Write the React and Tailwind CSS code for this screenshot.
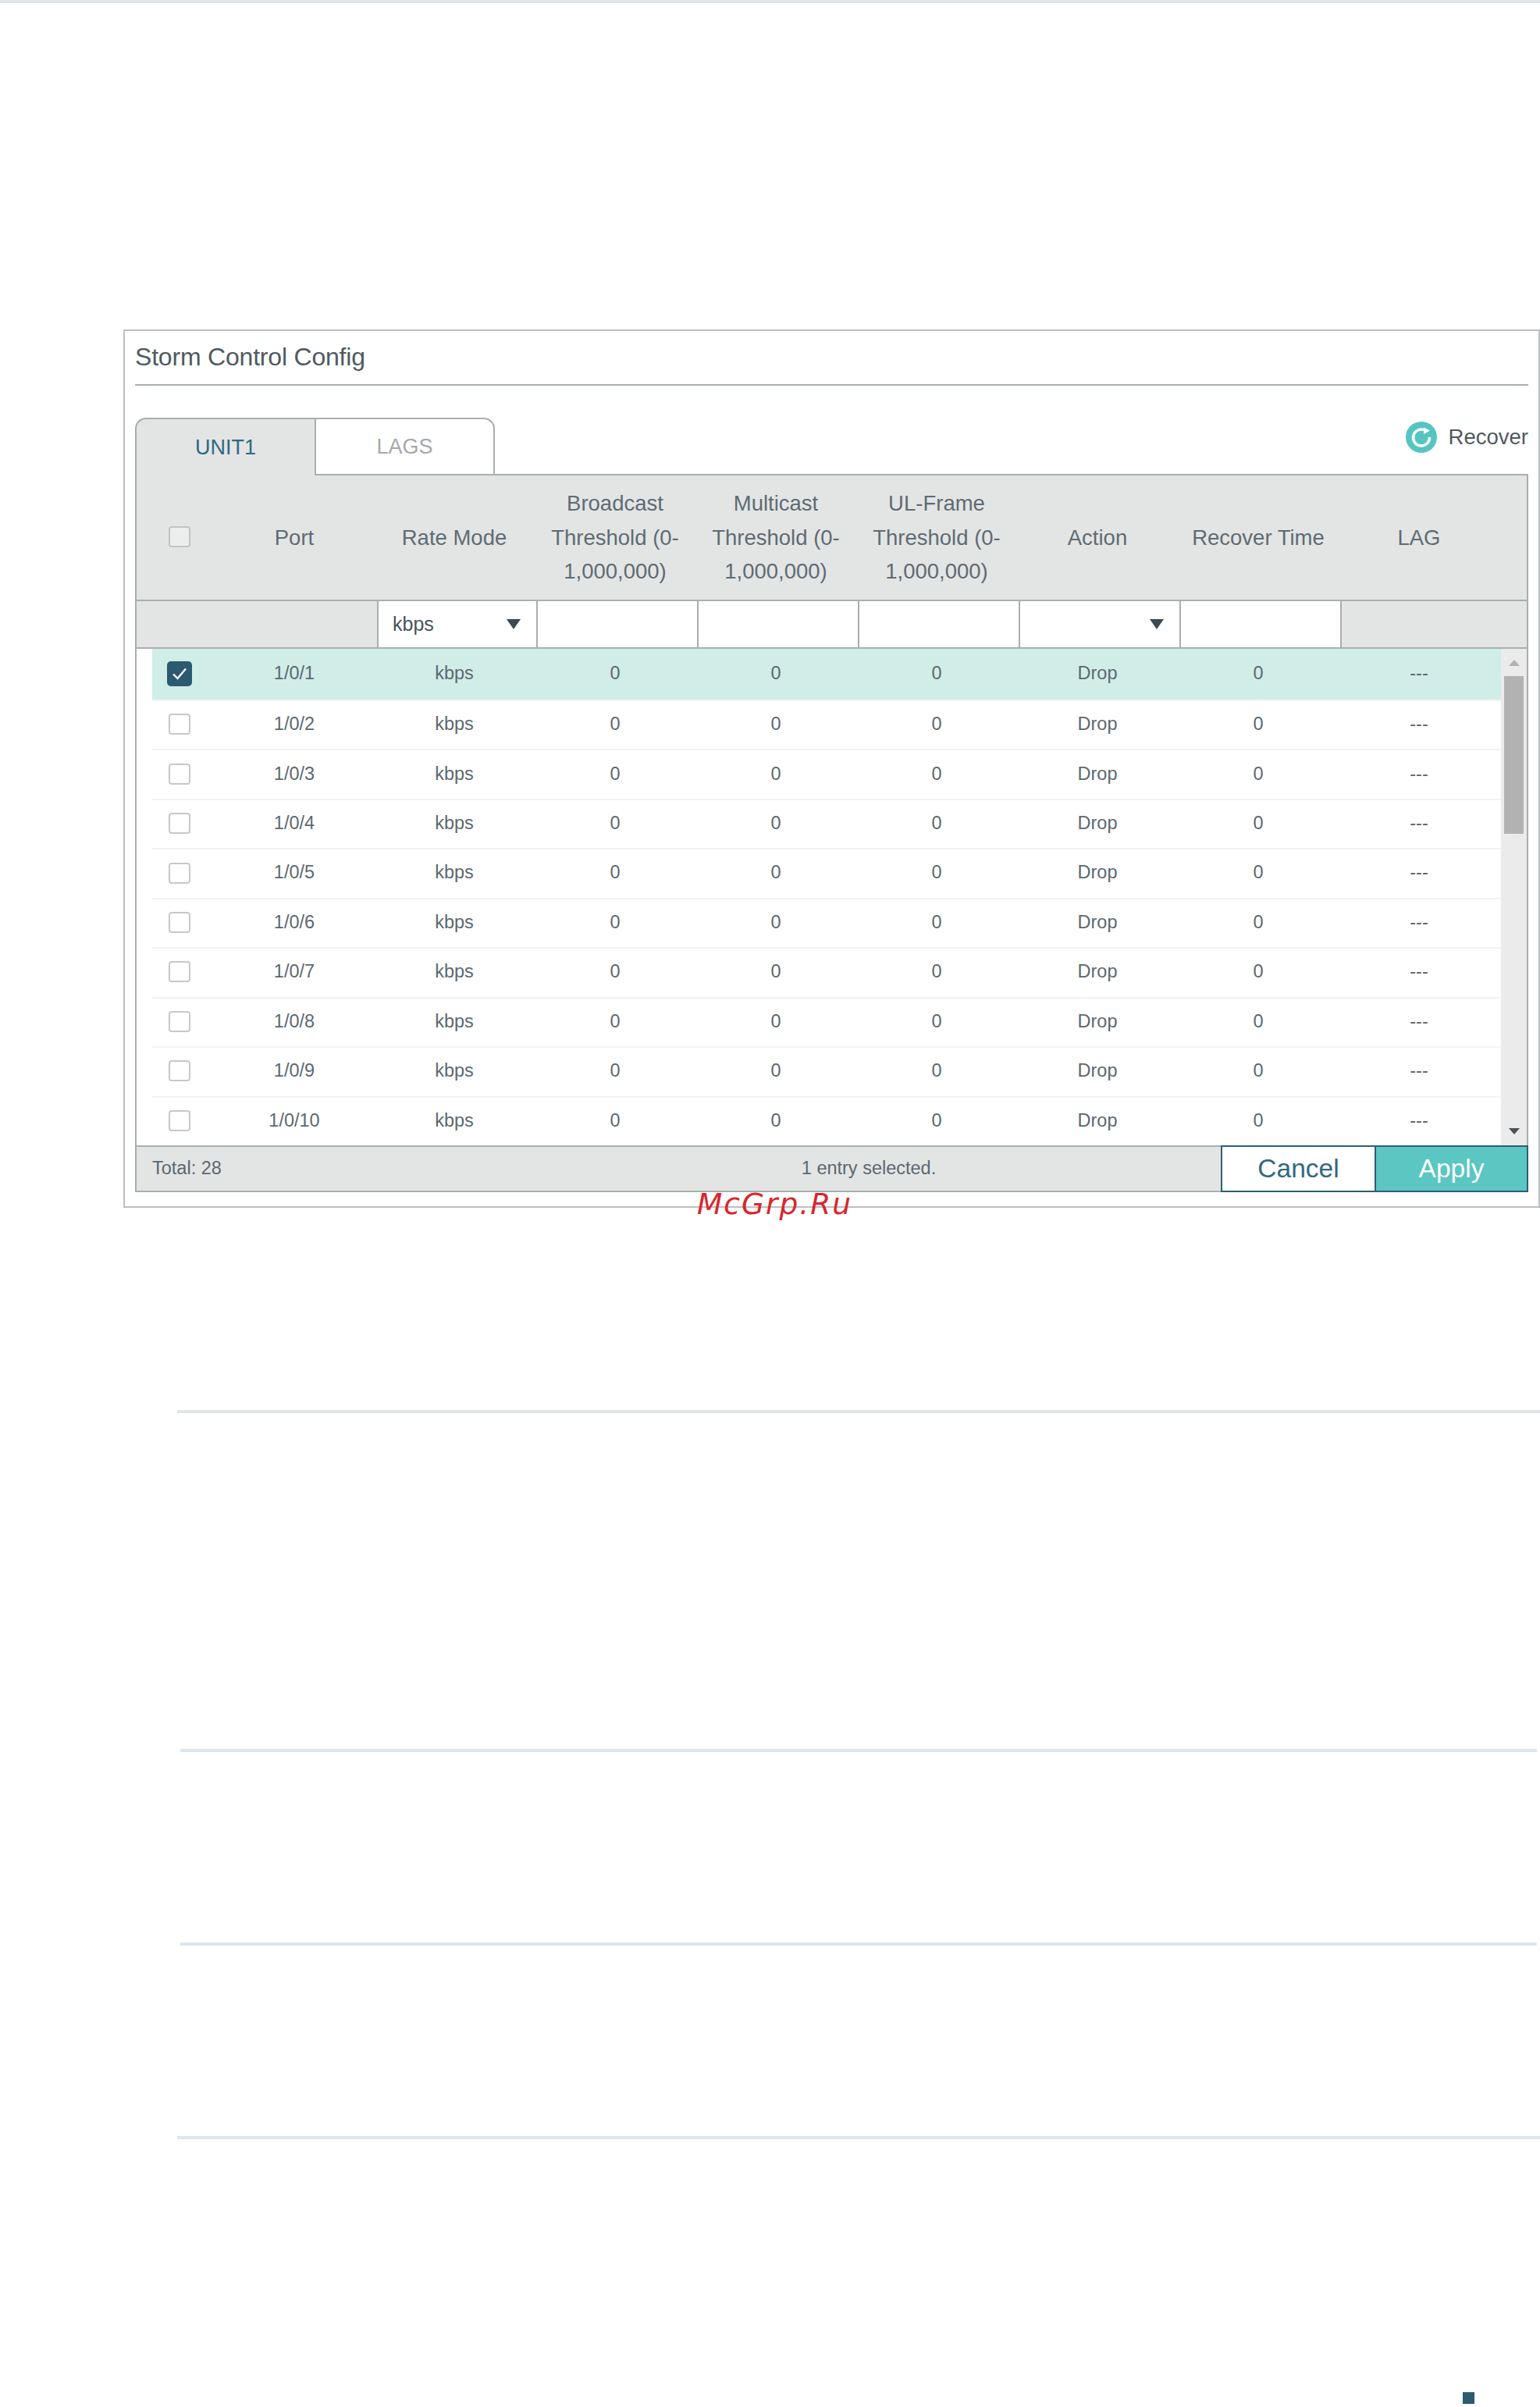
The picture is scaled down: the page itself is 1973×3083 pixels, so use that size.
const FONT = "font-['Liberation_Sans',Arial,sans-serif]";

const ports = ["1/0/1","1/0/2","1/0/3","1/0/4","1/0/5","1/0/6","1/0/7","1/0/8","1/0/9","1/0/10"];

function Caret({ className = "" }) {
  return (
    <svg className={className} width="18" height="13" viewBox="0 0 18 13">
      <polygon points="0,0 18,0 9,13" fill="#3d4a52" />
    </svg>
  );
}

function Box() {
  return <span className="block w-[28px] h-[27px] rounded-[4px] border-2 border-[#c6c9cb] bg-white" />;
}

function Checked() {
  return (
    <span className="flex w-[32px] h-[32px] rounded-[5px] bg-[#2b5a70] items-center justify-center">
      <svg width="20" height="18" viewBox="0 0 20 18" fill="none">
        <path d="M2 9.5 L7.5 15 L18 2.5" stroke="#fff" strokeWidth="2.4" />
      </svg>
    </span>
  );
}

function Cell({ children }) {
  return <div className="w-[206px] shrink-0 text-center">{children}</div>;
}

function PortCell({ children }) {
  return <div className="w-[204px] shrink-0 text-center">{children}</div>;
}

function Row({ port, checked }) {
  return (
    <div className={checked ? "flex items-center h-[65px] pb-[2px] bg-[#d1ede8]" : "flex items-center flex-1 pb-[2px] border-t-2 border-[#f1f3f3]"}>
      <div className="w-[70px] mr-[10px] flex justify-center">{checked ? <Checked /> : <Box />}</div>
      <PortCell>{port}</PortCell>
      <Cell>kbps</Cell>
      <Cell>0</Cell>
      <Cell>0</Cell>
      <Cell>0</Cell>
      <Cell>Drop</Cell>
      <Cell>0</Cell>
      <Cell>---</Cell>
    </div>
  );
}

function RecoverIcon() {
  return (
    <svg width="40" height="40" viewBox="0 0 40 40">
      <circle cx="20" cy="20" r="20" fill="#56c5c2" />
      <path d="M25.5 11.5 A10.5 10.5 0 1 0 30.5 20" fill="none" stroke="#fff" strokeWidth="3.5" />
      <polygon points="23,7.5 31,11.5 23,16" fill="#fff" />
    </svg>
  );
}

function FilterCell({ w = "w-[206px]", children }) {
  return <div className={`${w} shrink-0 h-full bg-white border-l-2 border-[#a9aeb0] flex items-center justify-between pl-[18px] pr-[20px] text-[25px] text-[#45535b]`}>{children}</div>;
}

export default function App() {
  return (
    <div className={`relative w-[1973px] h-[3083px] overflow-hidden bg-white ${FONT}`}>
      <div className="h-[4px] bg-[#dce6ec]" />

      <section className="mt-[418px] ml-[158px] w-[1815px] h-[1125px] border-2 border-[#bcc0c1] px-[13px] bg-white">
        <div className="h-[70px] pb-[2px] border-b-2 border-[#aab1b3] flex items-center text-[32px] tracking-[-0.2px] text-[#4f5a60]">
          Storm Control Config
        </div>

        <div className="mt-[41px] h-[72px] flex justify-between items-start">
          <div className="flex">
            <div className="relative z-10 w-[230px] h-[74px] bg-[#e3e5e5] border-l-2 border-t-2 border-[#a9aeb0] rounded-tl-[14px] flex items-center justify-center text-[27px] text-[#2f6a80]">
              UNIT1
            </div>
            <div className="w-[231px] h-[72px] bg-white border-x-2 border-t-2 border-[#a9aeb0] rounded-tr-[14px] flex items-center justify-center text-[27px] text-[#a5a9aa]">
              LAGS
            </div>
          </div>
          <div className="mt-[4px] flex items-center gap-[15px] text-[27.5px] text-[#4f5a60]">
            <RecoverIcon />
            <span>Recover</span>
          </div>
        </div>

        <div className="w-[1785px]">
          {/* Column headers */}
          <div className="h-[161px] bg-[#e3e5e5] border-x-2 border-t-2 border-[#a9aeb0] flex items-center pl-[20px] text-[27.5px] leading-[43.6px] text-[#5f6b73]">
            <div className="w-[70px] mr-[10px] flex justify-center">
              <span className="block w-[28px] h-[27px] -mt-[3px] rounded-[4px] border-2 border-[#c0c4c6] bg-[#eceeee]" />
            </div>
            <PortCell>Port</PortCell>
            <Cell>Rate Mode</Cell>
            <Cell>Broadcast Threshold (0-1,000,000)</Cell>
            <Cell>Multicast Threshold (0-1,000,000)</Cell>
            <Cell>UL-Frame Threshold (0-1,000,000)</Cell>
            <Cell>Action</Cell>
            <Cell>Recover Time</Cell>
            <Cell>LAG</Cell>
          </div>

          {/* Filter row */}
          <div className="h-[61px] bg-[#e3e5e5] border-x-2 border-t-2 border-[#a9aeb0] flex pl-[308px]">
            <FilterCell w="w-[204px]">
              <span>kbps</span>
              <Caret />
            </FilterCell>
            <FilterCell />
            <FilterCell />
            <FilterCell />
            <FilterCell>
              <span />
              <Caret />
            </FilterCell>
            <FilterCell />
            <div className="flex-1 border-l-2 border-[#a9aeb0]" />
          </div>

          {/* Body */}
          <div className="h-[638px] border-x-2 border-t-2 border-[#a9aeb0] flex pl-[20px] text-[23.5px] text-[#5c6870]">
            <div className="w-[1728px] flex flex-col">
              {ports.map((p, i) => (
                <Row key={p} port={p} checked={i === 0} />
              ))}
            </div>
            <div className="flex-1 bg-[#ebebeb] flex flex-col items-center">
              <svg className="mt-[14px]" width="14" height="8" viewBox="0 0 14 8">
                <polygon points="7,0 14,8 0,8" fill="#b2b2b2" />
              </svg>
              <div className="mt-[13px] w-[25px] h-[202px] bg-[#b2b2b2]" />
              <svg className="mt-auto mb-[14px]" width="14" height="8" viewBox="0 0 14 8">
                <polygon points="0,0 14,0 7,8" fill="#4a5257" />
              </svg>
            </div>
          </div>

          {/* Footer */}
          <div className="h-[60px] flex text-[23.5px] text-[#5c6870]">
            <div className="w-[1391px] bg-[#e3e5e5] border-y-2 border-l-2 border-[#a9aeb0] flex items-center">
              <div className="w-[487px] pl-[20px]">Total: 28</div>
              <div className="flex-1 text-center">1 entry selected.</div>
            </div>
            <button className="w-[197px] h-full bg-white border-2 border-r-0 border-[#2d5f75] text-[33.5px] text-[#2f6a80] flex items-center justify-center">
              Cancel
            </button>
            <button className="w-[197px] h-full bg-[#5bc6c2] border-2 border-[#2d5f75] text-[33.5px] text-white flex items-center justify-center">
              Apply
            </button>
          </div>
        </div>
      </section>

      <div className="mt-[259px] ml-[227px] w-[1746px] h-[4px] bg-[#dce6ec]" />
      <div className="mt-[430px] ml-[231px] w-[1738px] h-[4px] bg-[#dce6ec]" />
      <div className="mt-[244px] ml-[231px] w-[1738px] h-[4px] bg-[#dce6ec]" />
      <div className="mt-[244px] ml-[227px] w-[1746px] h-[4px] bg-[#dce6ec]" />
      <div className="mt-[324px] ml-[1874px] w-[15px] h-[15px] bg-[#2c5a70]" />

      <div className="absolute left-[893px] top-[1524px] font-['DejaVu_Sans',sans-serif] italic text-[37.5px] leading-none tracking-[2px] text-[#d8262c]">
        McGrp.Ru
      </div>
    </div>
  );
}
